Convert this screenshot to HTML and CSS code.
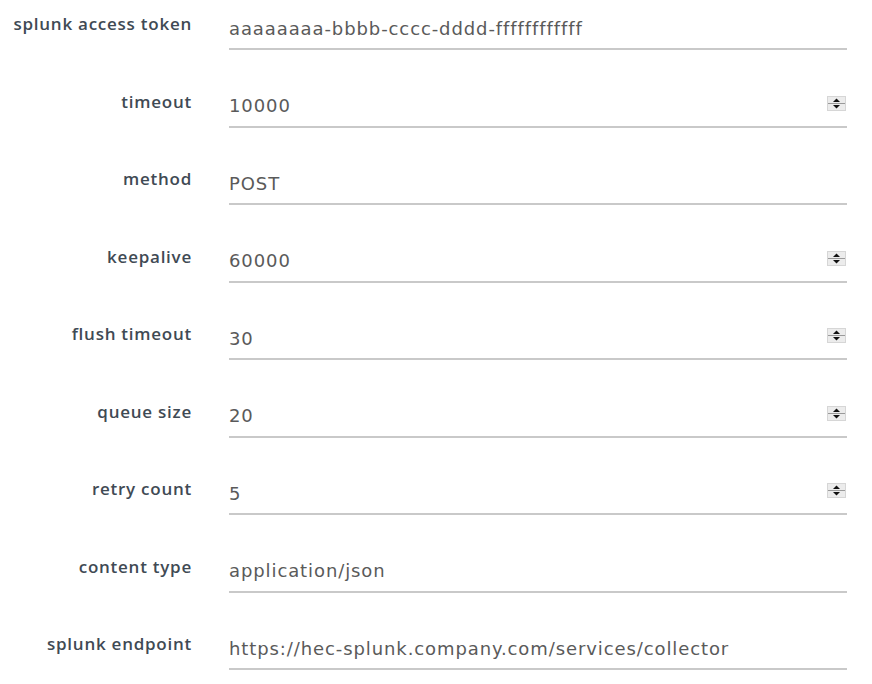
FILE: index.html
```
<!DOCTYPE html>
<html>
<head>
<meta charset="utf-8">
<link rel="stylesheet" href="styles.css">
</head>
<body>
<form class="form">
  <div class="row"><label class="label">splunk access token</label><div class="field"><input class="input" type="text" value="aaaaaaaa-bbbb-cccc-dddd-ffffffffffff"></div></div>
  <div class="row"><label class="label">timeout</label><div class="field"><input class="input" type="text" value="10000"><span class="spin"><svg width="19" height="15" viewBox="0 0 19 15"><rect x="0.5" y="0.5" width="18" height="14" fill="#ececec" stroke="#d6d6d6"/><line x1="1" y1="7.5" x2="18" y2="7.5" stroke="#9a9a9a"/><path d="M9.5 2.5 L13 6 L6 6 Z" fill="#111"/><path d="M6 9 L13 9 L9.5 12.5 Z" fill="#111"/></svg></span></div></div>
  <div class="row"><label class="label">method</label><div class="field"><input class="input" type="text" value="POST"></div></div>
  <div class="row"><label class="label">keepalive</label><div class="field"><input class="input" type="text" value="60000"><span class="spin"><svg width="19" height="15" viewBox="0 0 19 15"><rect x="0.5" y="0.5" width="18" height="14" fill="#ececec" stroke="#d6d6d6"/><line x1="1" y1="7.5" x2="18" y2="7.5" stroke="#9a9a9a"/><path d="M9.5 2.5 L13 6 L6 6 Z" fill="#111"/><path d="M6 9 L13 9 L9.5 12.5 Z" fill="#111"/></svg></span></div></div>
  <div class="row"><label class="label">flush timeout</label><div class="field"><input class="input" type="text" value="30"><span class="spin"><svg width="19" height="15" viewBox="0 0 19 15"><rect x="0.5" y="0.5" width="18" height="14" fill="#ececec" stroke="#d6d6d6"/><line x1="1" y1="7.5" x2="18" y2="7.5" stroke="#9a9a9a"/><path d="M9.5 2.5 L13 6 L6 6 Z" fill="#111"/><path d="M6 9 L13 9 L9.5 12.5 Z" fill="#111"/></svg></span></div></div>
  <div class="row"><label class="label">queue size</label><div class="field"><input class="input" type="text" value="20"><span class="spin"><svg width="19" height="15" viewBox="0 0 19 15"><rect x="0.5" y="0.5" width="18" height="14" fill="#ececec" stroke="#d6d6d6"/><line x1="1" y1="7.5" x2="18" y2="7.5" stroke="#9a9a9a"/><path d="M9.5 2.5 L13 6 L6 6 Z" fill="#111"/><path d="M6 9 L13 9 L9.5 12.5 Z" fill="#111"/></svg></span></div></div>
  <div class="row"><label class="label">retry count</label><div class="field"><input class="input" type="text" value="5"><span class="spin"><svg width="19" height="15" viewBox="0 0 19 15"><rect x="0.5" y="0.5" width="18" height="14" fill="#ececec" stroke="#d6d6d6"/><line x1="1" y1="7.5" x2="18" y2="7.5" stroke="#9a9a9a"/><path d="M9.5 2.5 L13 6 L6 6 Z" fill="#111"/><path d="M6 9 L13 9 L9.5 12.5 Z" fill="#111"/></svg></span></div></div>
  <div class="row"><label class="label">content type</label><div class="field"><input class="input" type="text" value="application/json"></div></div>
  <div class="row"><label class="label">splunk endpoint</label><div class="field"><input class="input" type="text" value="https://hec-splunk.company.com/services/collector"></div></div>
</form>
</body>
</html>
```
FILE: styles.css
```
html, body {
  margin: 0;
  padding: 0;
  background: #ffffff;
}
.form {
  display: flex;
  flex-direction: column;
  padding-top: 8px;
}
.row {
  display: grid;
  grid-template-columns: 192px 618px;
  column-gap: 37px;
  height: 77.5px;
  align-items: start;
}
.label {
  font-family: "Open Sans", sans-serif;
  font-weight: 600;
  font-size: 17px;
  letter-spacing: 0.75px;
  line-height: 20px;
  color: #3f4a54;
  text-align: right;
  padding-top: 6px;
  white-space: nowrap;
}
.field {
  display: flex;
  align-items: center;
  height: 40px;
  border-bottom: 2px solid #c9c9c9;
}
.input {
  flex: 1;
  min-width: 0;
  border: none;
  outline: none;
  padding: 0;
  margin: 0;
  background: transparent;
  font-family: "DejaVu Sans", sans-serif;
  font-size: 18px;
  letter-spacing: 0.9px;
  color: #5a5a5a;
  height: 40px;
}
.spin {
  display: block;
  width: 19px;
  height: 15px;
  margin-right: 1px;
  margin-bottom: 5px;
}
.spin svg {
  display: block;
}
```
